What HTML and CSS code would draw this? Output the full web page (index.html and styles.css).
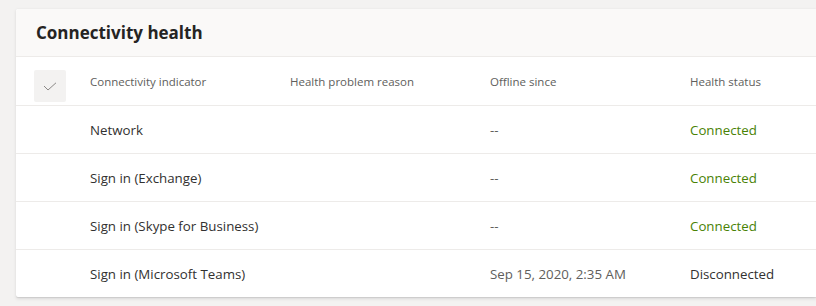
FILE: index.html
```html
<!DOCTYPE html>
<html>
<head>
<meta charset="utf-8">
<link rel="stylesheet" href="styles.css">
</head>
<body>
<div class="card">
  <div class="card-header"><h2 class="title">Connectivity health</h2></div>
  <div class="row head">
    <div class="check"><svg width="14" height="9" viewBox="0 0 14 9"><path d="M1 4 L5 8 L13 0.8" fill="none" stroke="#8a8886" stroke-width="1"/></svg></div>
    <div class="cell">Connectivity indicator</div>
    <div class="cell">Health problem reason</div>
    <div class="cell">Offline since</div>
    <div class="cell fill">Health status</div>
  </div>
  <div class="row">
    <div class="spacer"></div>
    <div class="cell">Network</div>
    <div class="cell"></div>
    <div class="cell muted">--</div>
    <div class="cell fill ok">Connected</div>
  </div>
  <div class="row">
    <div class="spacer"></div>
    <div class="cell">Sign in (Exchange)</div>
    <div class="cell"></div>
    <div class="cell muted">--</div>
    <div class="cell fill ok">Connected</div>
  </div>
  <div class="row">
    <div class="spacer"></div>
    <div class="cell">Sign in (Skype for Business)</div>
    <div class="cell"></div>
    <div class="cell muted">--</div>
    <div class="cell fill ok">Connected</div>
  </div>
  <div class="row last">
    <div class="spacer"></div>
    <div class="cell">Sign in (Microsoft Teams)</div>
    <div class="cell"></div>
    <div class="cell muted">Sep 15, 2020, 2:35 AM</div>
    <div class="cell fill">Disconnected</div>
  </div>
</div>
</body>
</html>
```
FILE: styles.css
```css
html, body {
  margin: 0;
  padding: 0;
}
body {
  background: #f3f2f1;
  font-family: "Segoe UI", "Open Sans", "Noto Sans", sans-serif;
  color: #323130;
  overflow: hidden;
  width: 816px;
  height: 306px;
}
.card {
  margin: 9px 0 0 16px;
  width: 800px;
  background: #fff;
  border-radius: 2px 0 0 2px;
  box-shadow: 0 1.6px 3.6px rgba(0,0,0,0.10), 0 0.3px 0.9px rgba(0,0,0,0.08);
  overflow: hidden;
}
.card-header {
  height: 47px;
  background: #faf9f8;
  border-bottom: 1px solid #edebe9;
  display: flex;
  align-items: center;
  padding-left: 20px;
}
.title {
  margin: 0;
  font-size: 17px;
  font-weight: 700;
  color: #252423;
}
.row {
  display: flex;
  align-items: center;
  height: 47px;
  border-bottom: 1px solid #edebe9;
  font-size: 13.3px;
}
.row.last {
  border-bottom: none;
}
.row.head {
  height: 48px;
  font-size: 11.5px;
  color: #605e5c;
}
.check {
  flex-shrink: 0;
  width: 32px;
  height: 32px;
  margin: 0 24px 3px 18px;
  background: #f3f2f1;
  border-radius: 2px;
  display: flex;
  align-items: center;
  justify-content: center;
  align-self: flex-end;
}
.spacer {
  flex-shrink: 0;
  width: 74px;
}
.cell {
  flex-shrink: 0;
  width: 200px;
  white-space: nowrap;
}
.cell.fill {
  flex: 1 1 auto;
  width: auto;
}
.muted {
  color: #605e5c;
}
.ok {
  color: #498205;
}
```
